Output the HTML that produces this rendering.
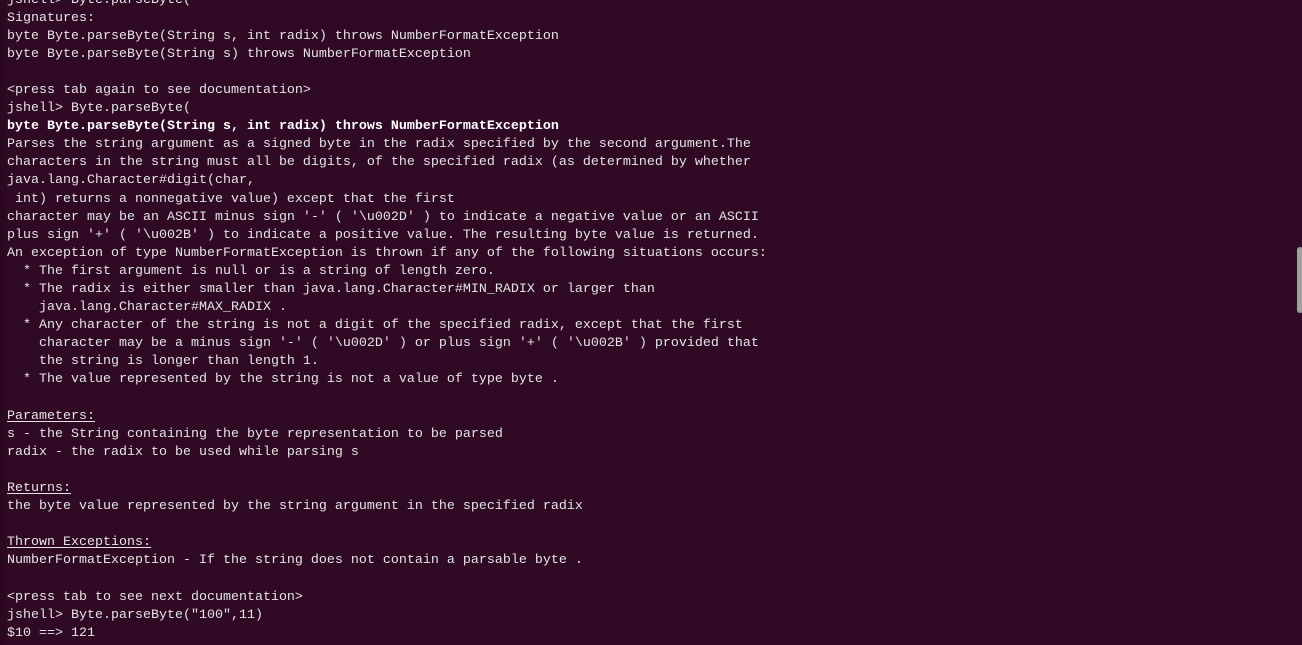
<!DOCTYPE html>
<html><head><meta charset="utf-8"><style>
html,body{margin:0;padding:0;width:1302px;height:645px;overflow:hidden;background:#300a24;}
.strip{position:absolute;left:0;top:0;width:6px;height:645px;background:#2a0920;}
pre{position:absolute;left:7px;top:-8.5px;margin:0;font-family:"Liberation Mono","DejaVu Sans Mono",monospace;font-size:13.33px;line-height:18.09px;color:#e4e4e4;}
b{color:#fff}
u{text-underline-offset:2px}
.sb{position:absolute;left:1297px;top:247px;width:6px;height:66px;background:#a0a0a0;border-radius:3px;}
</style></head><body><div class="strip"></div><pre>jshell&gt; Byte.parseByte(
Signatures:
byte Byte.parseByte(String s, int radix) throws NumberFormatException
byte Byte.parseByte(String s) throws NumberFormatException

&lt;press tab again to see documentation&gt;
jshell&gt; Byte.parseByte(
<b>byte Byte.parseByte(String s, int radix) throws NumberFormatException</b>
Parses the string argument as a signed byte in the radix specified by the second argument.The
characters in the string must all be digits, of the specified radix (as determined by whether
java.lang.Character#digit(char,
 int) returns a nonnegative value) except that the first
character may be an ASCII minus sign '-' ( '\u002D' ) to indicate a negative value or an ASCII
plus sign '+' ( '\u002B' ) to indicate a positive value. The resulting byte value is returned.
An exception of type NumberFormatException is thrown if any of the following situations occurs:
  * The first argument is null or is a string of length zero.
  * The radix is either smaller than java.lang.Character#MIN_RADIX or larger than
    java.lang.Character#MAX_RADIX .
  * Any character of the string is not a digit of the specified radix, except that the first
    character may be a minus sign '-' ( '\u002D' ) or plus sign '+' ( '\u002B' ) provided that
    the string is longer than length 1.
  * The value represented by the string is not a value of type byte .

<u>Parameters:</u>
s - the String containing the byte representation to be parsed
radix - the radix to be used while parsing s

<u>Returns:</u>
the byte value represented by the string argument in the specified radix

<u>Thrown Exceptions:</u>
NumberFormatException - If the string does not contain a parsable byte .

&lt;press tab to see next documentation&gt;
jshell&gt; Byte.parseByte("100",11)
$10 ==&gt; 121</pre><div class="sb"></div></body></html>
